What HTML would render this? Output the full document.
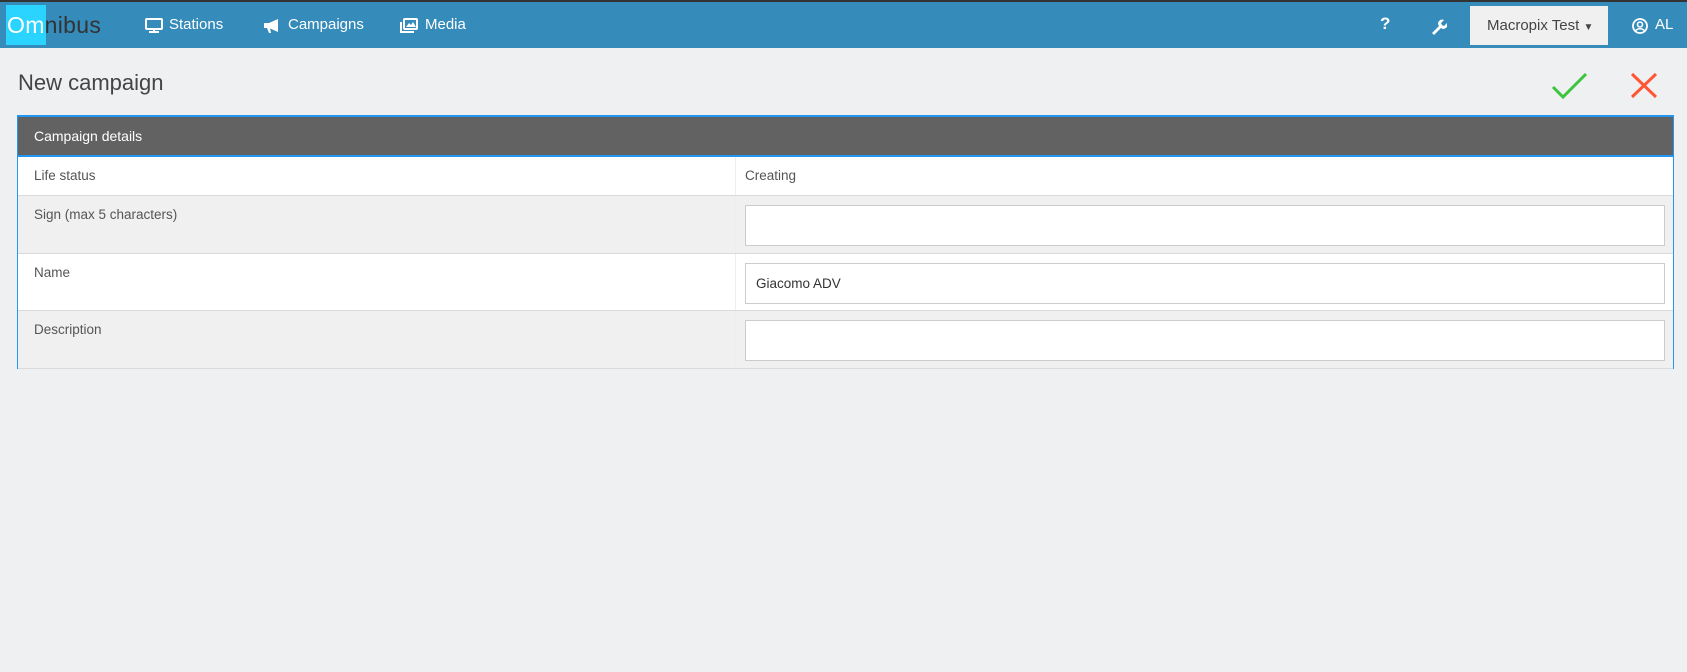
<!DOCTYPE html>
<html><head><meta charset="utf-8"><style>
*{box-sizing:border-box;margin:0;padding:0}
body{width:1687px;height:672px;background:#eef0f2;font-family:"Liberation Sans",sans-serif;position:relative;overflow:hidden}
.nav{position:absolute;left:0;top:0;width:1687px;height:48px;background:#358bba;border-top:2px solid #333}
.logo{position:absolute;left:6px;top:3px;width:40px;height:40px;background:#2ad4ff}
.lt{position:absolute;left:7px;top:10px;font-size:23px;color:#333;letter-spacing:0.3px}
.lt span{color:#fff}
.ni{position:absolute;top:14px;color:#fff;font-size:15px}
.ab{position:absolute}
h1{position:absolute;left:18px;top:70px;font-size:22px;font-weight:normal;color:#444}
.panel{position:absolute;left:17px;top:115px;width:1657px;border-left:1px solid #2196f3;border-right:1px solid #2196f3}
.hd{height:42px;background:#626262;border-top:2px solid #2196f3;border-bottom:2px solid #2196f3;color:#fff;font-size:14px;padding:11px 16px}
.row{position:relative;border-bottom:1px solid #dadada;font-size:13.5px;color:#555}
.row .l{position:absolute;left:16px;top:11px}
.row .r{position:absolute;left:727px;top:11px}
.row .c{position:absolute;left:717px;top:0;bottom:0;border-left:1px solid #eee}
.inp{position:absolute;left:727px;right:8px;top:9px;height:41px;background:#fff;border:1px solid #ccc;padding:12px 10px;color:#333}
</style></head><body>
<div class="nav">
 <div class="logo"></div>
 <div class="lt"><span>Om</span>nibus</div>
 <svg class="ab" style="left:145px;top:16px" width="18" height="16" viewBox="0 0 18 16"><rect x="1" y="1" width="16" height="10" rx="1" fill="none" stroke="#fff" stroke-width="2"/><rect x="8" y="11" width="2" height="3" fill="#fff"/><rect x="4" y="13" width="10" height="2" fill="#fff"/></svg>
 <div class="ni" style="left:169px">Stations</div>
 <svg class="ab" style="left:263px;top:16px" width="18" height="16" viewBox="0 0 18 16"><path d="M1 5h5l9-4v13l-9-4H1z" fill="#fff"/><path d="M4 10l2 5h2l-1-5z" fill="#fff"/></svg>
 <div class="ni" style="left:288px">Campaigns</div>
 <svg class="ab" style="left:400px;top:16px" width="18" height="15" viewBox="0 0 18 15"><rect x="4" y="1" width="13" height="10" rx="1" fill="none" stroke="#fff" stroke-width="2"/><path d="M6 9l3-4 2 2 2-3 3 5z" fill="#fff"/><path d="M1 4v10h13" fill="none" stroke="#fff" stroke-width="2"/></svg>
 <div class="ni" style="left:425px">Media</div>
 <div class="ni" style="left:1380px;font-weight:bold;font-size:17px;top:12px">?</div>
 <svg class="ab" style="left:1430px;top:16px" width="17" height="17" viewBox="0 0 17 17"><path d="M2 15l7-7a4 4 0 0 1 5-6l-3 3 1 2 2 1 3-3a4 4 0 0 1-6 5l-7 7z" fill="#fff"/></svg>
 <div class="ab" style="left:1470px;top:4px;width:138px;height:39px;background:#f0f0f0;font-size:15px;color:#444;padding:11px 0 0 17px">Macropix Test <span style="font-size:10px">▼</span></div>
 <svg class="ab" style="left:1632px;top:16px" width="16" height="16" viewBox="0 0 16 16"><circle cx="8" cy="8" r="7" fill="none" stroke="#fff" stroke-width="1.8"/><circle cx="8" cy="6.5" r="2.5" fill="none" stroke="#fff" stroke-width="1.6"/><path d="M3.5 13a5 4 0 0 1 9 0" fill="none" stroke="#fff" stroke-width="1.6"/></svg>
 <div class="ni" style="left:1655px">AL</div>
</div>
<h1>New campaign</h1>
<svg class="ab" style="left:1551px;top:72px" width="37" height="28" viewBox="0 0 37 28"><path d="M2 15l10 10L35 2" fill="none" stroke="#3dc43d" stroke-width="3"/></svg>
<svg class="ab" style="left:1630px;top:72px" width="28" height="27" viewBox="0 0 28 27"><path d="M2 2l24 23M26 2L2 25" fill="none" stroke="#ff5533" stroke-width="3"/></svg>
<div class="panel">
 <div class="hd">Campaign details</div>
 <div class="row" style="height:39px;background:#fff"><div class="l">Life status</div><div class="c"></div><div class="r">Creating</div></div>
 <div class="row" style="height:58px;background:#f0f0f0"><div class="l">Sign (max 5 characters)</div><div class="c"></div><div class="inp"></div></div>
 <div class="row" style="height:57px;background:#fff"><div class="l">Name</div><div class="c"></div><div class="inp">Giacomo ADV</div></div>
 <div class="row" style="height:58px;background:#f0f0f0"><div class="l">Description</div><div class="c"></div><div class="inp"></div></div>
</div>
</body></html>
